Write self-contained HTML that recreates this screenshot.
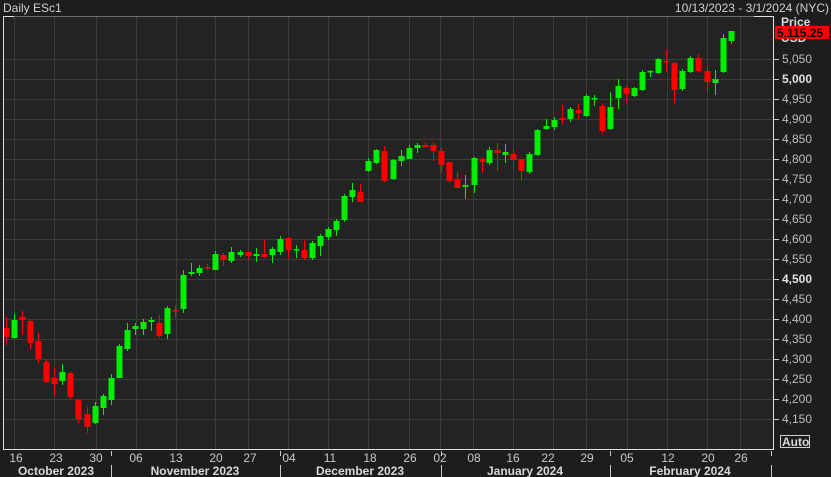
<!DOCTYPE html>
<html><head><meta charset="utf-8"><style>
html,body{margin:0;padding:0;background:#1d1d1d;width:831px;height:477px;overflow:hidden}
svg{display:block}
text{font-family:"Liberation Sans Narrow","Liberation Sans",sans-serif}
</style></head><body>
<svg width="831" height="477" xmlns="http://www.w3.org/2000/svg">
<rect x="0" y="0" width="831" height="477" fill="#1d1d1d"/>
<rect x="3" y="17" width="771" height="433" fill="#232323"/>
<g id="grid" stroke="#3c3c3c" stroke-width="1"></g>
<g id="candles"></g>
<line x1="3.5" y1="17" x2="3.5" y2="450" stroke="#e0e0e0"/>
<line x1="3" y1="16.5" x2="774" y2="16.5" stroke="#6a6a6a"/>
<line x1="3" y1="16.5" x2="14" y2="16.5" stroke="#e0e0e0"/>
<line x1="754" y1="16.5" x2="774" y2="16.5" stroke="#e0e0e0"/>
<line x1="773.5" y1="16" x2="773.5" y2="450" stroke="#e0e0e0"/>
<line x1="3" y1="449.5" x2="774" y2="449.5" stroke="#e0e0e0"/>
<g id="ylab"></g>
<g id="xlab"></g>
<text x="3" y="12" font-size="12" fill="#d0d0d0">Daily ESc1</text>
<text x="829" y="12" font-size="12" text-anchor="end" fill="#d0d0d0">10/13/2023 - 3/1/2024 (NYC)</text>
<text x="781" y="26" font-size="12" font-weight="bold" fill="#d8d8d8">Price</text>
<text x="781" y="42" font-size="12" font-weight="bold" fill="#d8d8d8">USD</text>
<rect x="775" y="26" width="54" height="13" fill="#ff0000"/>
<text x="777" y="37" font-size="12" font-weight="bold" fill="#000000">5,115.25</text>
<rect x="780.5" y="435.5" width="29" height="12" fill="none" stroke="#d0d0d0"/>
<text x="782" y="446" font-size="12" font-weight="bold" fill="#d8d8d8">Auto</text>
</svg>
<script>
const NS="http://www.w3.org/2000/svg";
function el(p,t,a,txt){const e=document.createElementNS(NS,t);for(const k in a)e.setAttribute(k,a[k]);if(txt)e.textContent=txt;document.getElementById(p).appendChild(e);}
const vx=[14,54,96,136,176,215,248,288,328,368,409,440,473,513,553,586,627,667,707,740];
vx.forEach(x=>el('grid','line',{x1:x+.5,y1:17,x2:x+.5,y2:449}));
for(let p=4150;p<=5050;p+=50){const y=79+(5000-p)*0.4;el('grid','line',{x1:3,y1:y+.5,x2:773,y2:y+.5});
 el('ylab','line',{x1:774,y1:y+.5,x2:779,y2:y+.5,stroke:'#c8c8c8'});
 const b=(p==5000||p==4500);el('ylab','text',{x:782,y:y+4,'font-size':12,'font-weight':b?'bold':'normal',fill:b?'#e0e0e0':'#bdbdbd'},p.toLocaleString('en-US'));}
const days=[[16,'16'],[56,'23'],[96,'30'],[136,'06'],[176,'13'],[216,'20'],[250,'27'],[289,'04'],[330,'11'],[370,'18'],[410,'26'],[440,'02'],[474,'08'],[513,'16'],[548,'22'],[587,'29'],[627,'05'],[668,'12'],[708,'20'],[741,'26']];
days.forEach(d=>el('xlab','text',{x:d[0],y:462,'font-size':12,'text-anchor':'middle',fill:'#c8c8c8'},d[1]));
[111,280,441,610,771].forEach(x=>{el('xlab','line',{x1:x+.5,y1:451,x2:x+.5,y2:456,stroke:'#c8c8c8'});el('xlab','line',{x1:x+.5,y1:465,x2:x+.5,y2:477,stroke:'#c8c8c8'});});
[['October 2023',56],['November 2023',195],['December 2023',360],['January 2024',525],['February 2024',690]].forEach(m=>el('xlab','text',{x:m[1],y:475,'font-size':12,'font-weight':'bold','text-anchor':'middle',fill:'#d8d8d8'},m[0]));
const C=[[6,328,337,317,345,'r'],[14,320,338,314,339,'g'],[22,317,320,311,335,'r'],[30,321,343,320,349,'r'],[38,341,359,333,363,'r'],[46,362,382,359,383,'r'],[54,378,384,368,396,'r'],[62,372,381,364,385,'g'],[70,373,397,371,399,'r'],[78,400,419,399,423,'r'],[87,414,427,407,433,'r'],[95,406,423,402,424,'g'],[103,396,408,394,415,'g'],[111,378,400,374,405,'g'],[119,346,378,344,378,'g'],[127,330,349,323,351,'g'],[135,326,329,323,335,'g'],[143,322,329,319,335,'g'],[151,320,322,317,331,'g'],[159,323,336,315,338,'r'],[167,308,334,306,339,'g'],[175,310,311,305,318,'r'],[183,275,309,270,313,'g'],[191,272,274,263,276,'g'],[199,268,273,265,276,'g'],[207,267,268,264,270,'r'],[215,254,270,251,270,'g'],[223,255,260,253,266,'r'],[231,252,261,247,263,'g'],[240,252,255,250,257,'g'],[248,252,256,252,260,'r'],[256,254,256,248,262,'g'],[264,254,257,240,258,'r'],[272,249,255,247,263,'g'],[280,239,252,236,255,'g'],[288,238,250,237,259,'r'],[296,249,250,245,258,'g'],[304,250,258,240,260,'r'],[312,243,258,241,260,'g'],[320,236,246,234,256,'g'],[328,229,237,227,240,'g'],[336,221,230,219,236,'g'],[344,196,220,194,222,'g'],[352,190,197,183,202,'g'],[360,192,202,184,202,'r'],[368,161,171,158,172,'g'],[376,150,163,149,164,'g'],[384,151,181,146,182,'r'],[393,160,179,159,180,'g'],[401,156,161,150,166,'g'],[409,148,159,145,159,'g'],[417,145,148,143,153,'g'],[425,145,147,142,147,'r'],[433,145,151,142,161,'r'],[441,151,165,148,173,'r'],[449,162,181,162,183,'r'],[457,179,188,172,188,'r'],[465,185,187,175,199,'g'],[474,158,185,157,193,'g'],[482,159,162,157,173,'r'],[489,150,163,147,165,'g'],[497,150,153,143,171,'r'],[505,152,155,144,163,'g'],[513,154,160,149,168,'r'],[521,159,171,159,181,'r'],[529,154,172,152,174,'g'],[537,130,155,129,156,'g'],[546,126,129,119,130,'g'],[554,120,127,117,130,'g'],[562,118,120,105,124,'r'],[570,109,119,107,122,'g'],[578,110,113,104,120,'r'],[586,96,116,94,117,'g'],[594,98,99,95,106,'g'],[602,106,131,103,133,'r'],[610,107,129,92,130,'g'],[618,86,98,79,109,'g'],[626,88,94,86,103,'r'],[634,88,96,87,97,'g'],[642,72,90,70,91,'g'],[650,71,72,70,77,'g'],[658,59,73,58,74,'g'],[666,61,62,50,72,'r'],[674,63,90,62,104,'r'],[682,71,89,69,91,'g'],[690,58,72,56,73,'g'],[698,58,71,54,73,'r'],[707,71,82,66,92,'r'],[715,79,83,70,95,'g'],[723,38,72,34,73,'g'],[731,31,41,31,44,'g']];
C.forEach(c=>{const col=c[5]=='g'?'#00ee00':'#ff0000';
 el('candles','line',{x1:c[0]+.5,y1:c[3],x2:c[0]+.5,y2:c[4],stroke:col});
 el('candles','rect',{x:c[0]-2.5,y:c[1],width:6,height:Math.max(1.5,c[2]-c[1]),fill:col});});
</script>
</body></html>
